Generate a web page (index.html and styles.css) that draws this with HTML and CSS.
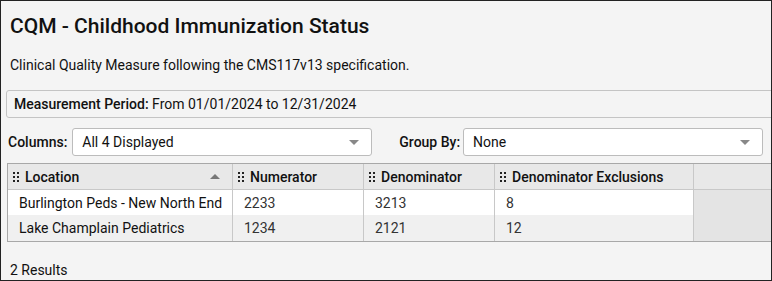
FILE: index.html
```html
<!DOCTYPE html>
<html lang="en">

<head>
    <meta charset="UTF-8">
    <meta name="viewport" content="width=device-width, initial-scale=1.0">
    <title>CQM - Childhood Immunization Status</title>
    <link rel="stylesheet" href="styles.css">
</head>

<body>
    <div class="page">
        <h1>CQM - Childhood Immunization Status</h1>
        <p class="desc">Clinical Quality Measure following the CMS117v13 specification.</p>

        <div class="period"><b>Measurement Period:</b> From 01/01/2024 to 12/31/2024</div>

        <div class="toolbar">
            <label class="lbl">Columns:</label>
            <div class="select">
                <span>All 4 Displayed</span>
                <span class="caret"></span>
            </div>
            <label class="lbl group-lbl">Group By:</label>
            <div class="select">
                <span>None</span>
                <span class="caret"></span>
            </div>
        </div>

        <div class="grid">
            <div class="row head">
                <div class="cell"><span class="grip"></span>Location<span class="sort"></span></div>
                <div class="cell"><span class="grip"></span>Numerator</div>
                <div class="cell"><span class="grip"></span>Denominator</div>
                <div class="cell"><span class="grip"></span>Denominator Exclusions</div>
                <div class="cell filler"></div>
            </div>
            <div class="row">
                <div class="cell name">Burlington Peds - New North End</div>
                <div class="cell">2233</div>
                <div class="cell">3213</div>
                <div class="cell">8</div>
                <div class="cell filler"></div>
            </div>
            <div class="row alt">
                <div class="cell name">Lake Champlain Pediatrics</div>
                <div class="cell">1234</div>
                <div class="cell">2121</div>
                <div class="cell">12</div>
                <div class="cell filler"></div>
            </div>
        </div>

        <div class="footer">2 Results</div>
    </div>
</body>

</html>
```

FILE: styles.css
```css
body {
    margin: 0;
    padding: 0;
    font-family: Roboto, "Liberation Sans", sans-serif;
    color: #111;
}

.page {
    width: 772px;
    height: 281px;
    box-sizing: border-box;
    border: 1px solid #222;
    background-color: #f4f4f4;
    overflow: hidden;
}

h1 {
    margin: 0;
    padding: 13px 0 0 9px;
    font-size: 21px;
    font-weight: 500;
    line-height: 24px;
}

.desc {
    margin: 0;
    padding: 19px 0 0 9px;
    font-size: 14px;
    line-height: 16px;
}

.period {
    margin: 17px -10px 0 5px;
    height: 26px;
    line-height: 26px;
    padding-left: 7px;
    border: 1px solid #c4c4c4;
    border-radius: 3px;
    font-size: 14px;
}

.period b {
    font-weight: 500;
}

.toolbar {
    display: flex;
    align-items: center;
    margin-top: 10px;
    padding-left: 7px;
}

.lbl {
    font-size: 14px;
    font-weight: 500;
    margin-right: 5px;
}

.group-lbl {
    margin-left: 27px;
    margin-right: 3px;
}

.select {
    width: 300px;
    height: 28px;
    box-sizing: border-box;
    display: flex;
    align-items: center;
    justify-content: space-between;
    padding: 0 12px 0 9px;
    background-color: #fff;
    border: 1px solid #bcbcbc;
    border-radius: 3px;
    font-size: 14px;
}

.caret {
    width: 0;
    height: 0;
    border-left: 5px solid transparent;
    border-right: 5px solid transparent;
    border-top: 5px solid #888;
}

.grid {
    margin: 7px -10px 0 6px;
    border: 1px solid #a8a8a8;
    border-right: none;
}

.row {
    display: grid;
    grid-template-columns: 225px 131px 131px 199px 1fr;
    height: 25px;
    background-color: #fff;
    font-size: 14px;
}

.row.alt {
    background-color: #f0f0f0;
    height: 26px;
}

.row.head {
    height: 25px;
    background-color: #e8e8e8;
    border-bottom: 1px solid #c8c8c8;
    font-weight: 500;
}

.cell {
    display: flex;
    align-items: center;
    padding-left: 11px;
    border-right: 1px solid #c8c8c8;
    color: #333;
}

.name {
    color: #111;
}

.head .cell {
    padding-left: 4px;
    color: #111;
}

.filler {
    background-color: #e4e4e4;
    border-right: none;
}

.head .filler {
    background-color: #e8e8e8;
}

.grip {
    width: 8px;
    height: 11px;
    margin-right: 5px;
    background-image: radial-gradient(circle, #222 1.1px, transparent 1.3px);
    background-size: 4px 4px;
    background-position: 0 0;
}

.sort {
    margin-left: auto;
    margin-right: 12px;
    width: 0;
    height: 0;
    border-left: 5px solid transparent;
    border-right: 5px solid transparent;
    border-bottom: 5px solid #777;
}

.footer {
    padding: 20px 0 0 9px;
    font-size: 14px;
    line-height: 16px;
}
```
